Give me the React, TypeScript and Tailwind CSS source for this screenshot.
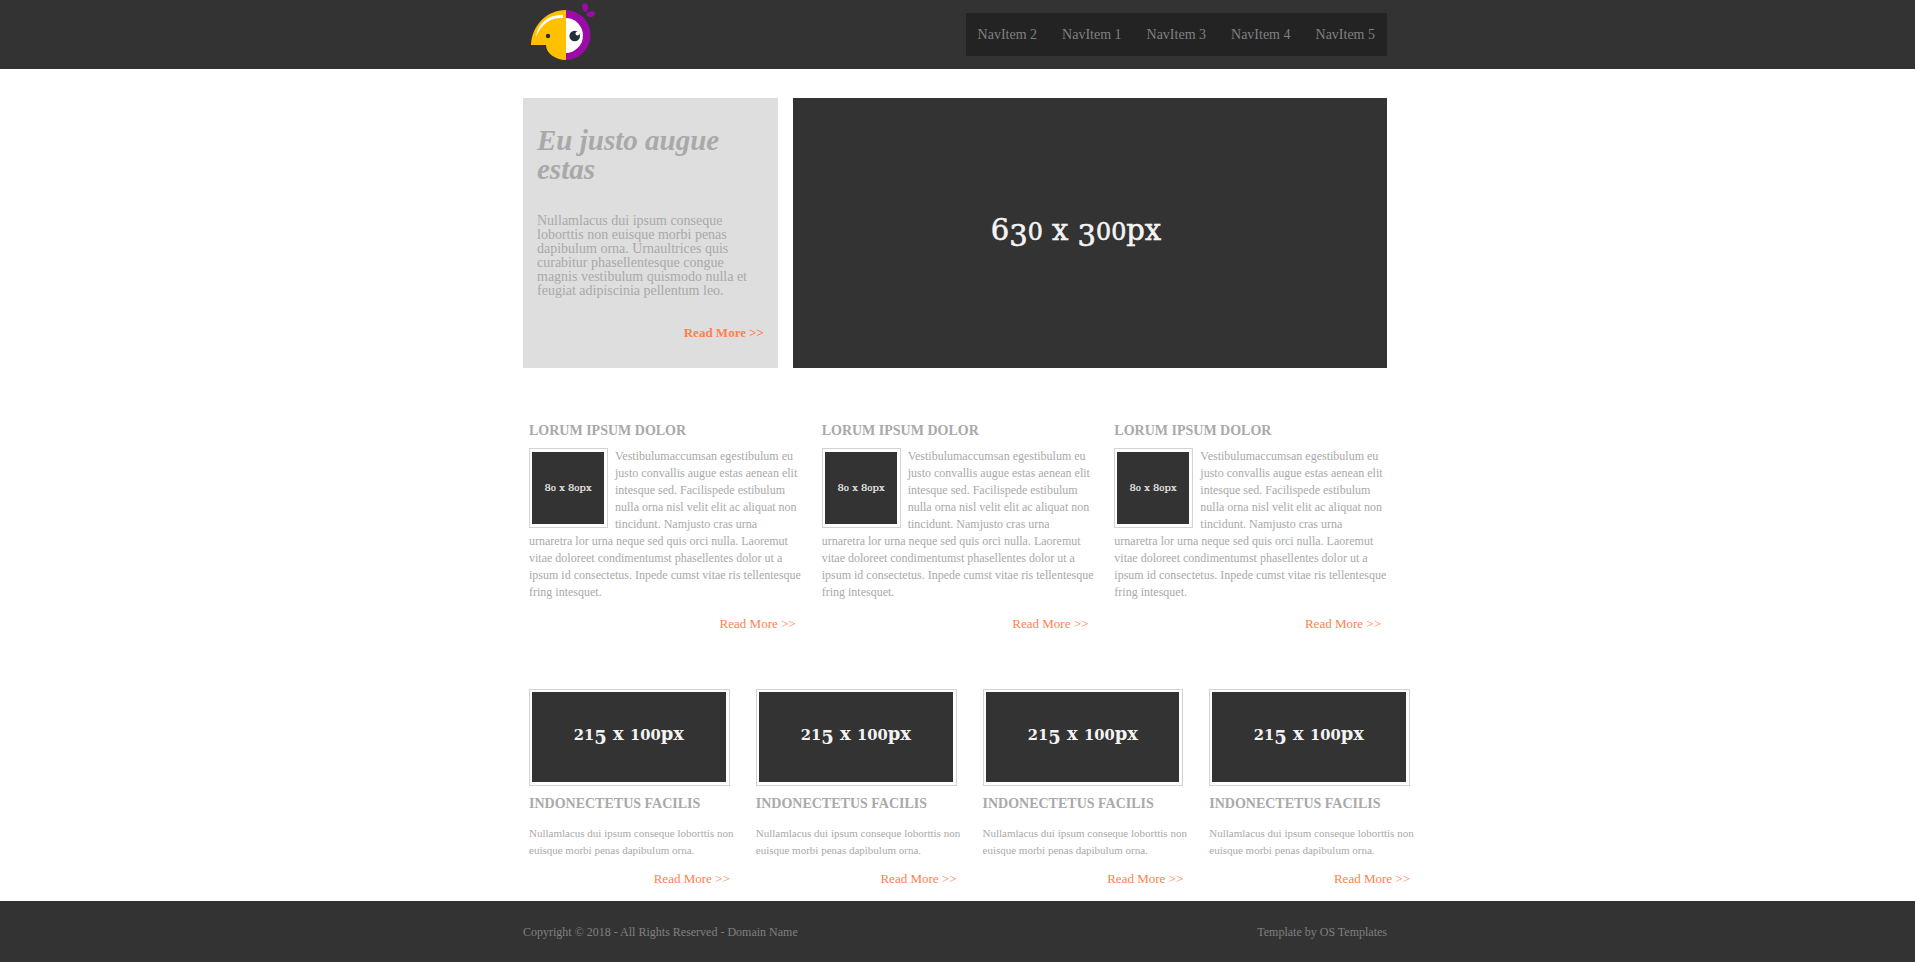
type Run = { t: string; size: number; dy: number };

const navItems = ["NavItem 2", "NavItem 1", "NavItem 3", "NavItem 4", "NavItem 5"];

// Old-style numerals: 0, 1 and 2 sit at x-height, 3 and 5 drop below the baseline.
function runs(text: string, size: number): Run[] {
  return (text.match(/[012]+|[35]+|[^01235]+/g) ?? []).map((t) => {
    if (/^[012]/.test(t)) return { t, size: size * 0.82, dy: 0 };
    if (/^[35]/.test(t)) return { t, size, dy: size * 0.2 };
    return { t, size, dy: 0 };
  });
}

type PlaceholderProps = {
  text: string;
  width: number;
  height: number;
  size: number;
  x: number;
  y: number;
  bold?: boolean;
};

function Placeholder({ text, width, height, size, x, y, bold }: PlaceholderProps) {
  let prev = 0;
  return (
    <svg viewBox={`0 0 ${width} ${height}`} className="block w-full bg-[#333]" role="img" aria-label={text}>
      <text
        x={x}
        y={y}
        textAnchor="middle"
        fill="#f4f4f4"
        stroke="#f4f4f4"
        strokeWidth={bold ? 0 : size * 0.02}
        fontSize={size}
        fontWeight={bold ? 700 : 400}
        className="font-['DejaVu_Serif',serif]"
      >
        {runs(text, size).map((g, i) => {
          const dy = g.dy - prev;
          prev = g.dy;
          return (
            <tspan key={i} fontSize={g.size} dy={dy}>
              {g.t}
            </tspan>
          );
        })}
      </text>
    </svg>
  );
}

function Logo() {
  return (
    <svg viewBox="0 0 100 69" className="block h-[69px] w-[100px]" role="img" aria-label="Logo">
      <path d="M50.500 10A25 25 0 0 1 50.500 60Z" fill="#9c0ba8" />
      <path d="M50.500 18A17.500 17.500 0 0 1 50.500 53Z" fill="#fff" />
      <path d="M51 10V60C40 60 31 53 31 45H16C17 25 32 10 51 10Z" fill="#ffc000" />
      <path d="M21 37C23 23 34 14 48 15V18C36 17 26 24 21 37Z" fill="#fff" />
      <circle cx="33" cy="36" r="2.200" fill="#22303c" />
      <circle cx="59.700" cy="36" r="5.300" fill="#22303c" />
      <circle cx="62.500" cy="33.500" r="2" fill="#fff" />
      <path d="M69.500 3.200C73.500 3 74 7.500 71.800 12H70C66.500 9.500 66 4 69.500 3.200Z" fill="#9c0ba8" />
      <path d="M71 14.500C73.500 10.500 79.500 10.500 80 13.500C79.500 18 73 18 71 14.500Z" fill="#9c0ba8" />
    </svg>
  );
}

function ReadMore({ bold }: { bold?: boolean }) {
  return (
    <p className="text-right text-[13px] leading-[17px]">
      <a href="#" className={bold ? "font-bold text-[#ff7f50]" : "text-[#ff7f50]"}>
        Read More &gt;&gt;
      </a>
    </p>
  );
}

export default function App() {
  return (
    <div className="flex min-h-screen flex-col bg-white font-['Liberation_Serif',serif] text-[#a9a9a9]">
      <header className="bg-[#333] pr-[5px]">
        <div className="mx-auto flex max-w-[864px] items-center justify-between">
          <a href="#" className="-ml-2">
            <Logo />
          </a>
          <nav className="bg-[#232323]">
            <ul className="flex gap-px">
              {navItems.map((item) => (
                <li key={item}>
                  <a href="#" className="block px-3 text-[14px] leading-[43px] text-[#808080]">
                    {item}
                  </a>
                </li>
              ))}
            </ul>
          </nav>
        </div>
      </header>

      <main className="grow pr-[5px]">
        <div className="mx-auto max-w-[864px]">
          <section className="mt-[29px] flex gap-[15px]">
            <div className="w-[255px] shrink-0 bg-[#dedede] px-[14px] pt-7">
              <h1 className="text-[29px] font-bold italic leading-[29px]">Eu justo augue estas</h1>
              <p className="mt-[30px] text-[14px] leading-[14px]">
                Nullamlacus dui ipsum conseque loborttis non euisque morbi penas dapibulum orna. Urnaultrices quis curabitur
                phasellentesque congue magnis vestibulum quismodo nulla et feugiat adipiscinia pellentum leo.
              </p>
              <div className="mt-[26px]">
                <ReadMore bold />
              </div>
            </div>
            <div className="grow">
              <Placeholder text="630 x 300px" width={594} height={270} size={29} x={283} y={142} />
            </div>
          </section>

          <section className="mt-[54px] grid grid-cols-3 gap-[26px] px-1.5">
            {[0, 1, 2].map((i) => (
              <article key={i}>
                <h2 className="text-[14px] font-bold leading-[17px]">LORUM IPSUM DOLOR</h2>
                <div className="float-left mr-[7px] mt-[9px] w-[79px] border border-[#d3d3d3] py-[3px] pl-[2px] pr-[3px]">
                  <Placeholder text="80 x 80px" width={72} height={72} size={10} x={36} y={39} />
                </div>
                <p className="-mr-1.5 mt-[9px] text-[12px] leading-[17px]">
                  Vestibulumaccumsan egestibulum eu justo convallis augue estas aenean elit intesque sed. Facilispede estibulum
                  nulla orna nisl velit elit ac aliquat non tincidunt. Namjusto cras urna urnaretra lor urna neque sed quis orci
                  nulla. Laoremut vitae doloreet condimentumst phasellentes dolor ut a ipsum id consectetus. Inpede cumst vitae
                  ris tellentesque fring intesquet.
                </p>
                <div className="mt-[14px]">
                  <ReadMore />
                </div>
              </article>
            ))}
          </section>

          <section className="-mr-[23px] ml-1.5 mt-[57px] grid grid-cols-4 gap-[26px]">
            {[0, 1, 2, 3].map((i) => (
              <article key={i}>
                <div className="border border-[#d3d3d3] pb-[3px] pl-[2px] pr-[3px] pt-[2px]">
                  <Placeholder text="215 x 100px" width={194} height={90} size={18} x={97} y={48} bold />
                </div>
                <h2 className="mt-[9px] text-[14px] font-bold leading-[17px]">INDONECTETUS FACILIS</h2>
                <p className="-mr-1.5 mt-[13px] text-[11px] leading-[17px]">
                  Nullamlacus dui ipsum conseque loborttis non euisque morbi penas dapibulum orna.
                </p>
                <div className="mt-[11px]">
                  <ReadMore />
                </div>
              </article>
            ))}
          </section>
        </div>
      </main>

      <footer className="mt-3 bg-[#333] pr-[5px] text-[12px] leading-[17px] text-[#808080]">
        <div className="mx-auto flex max-w-[864px] justify-between pb-[21px] pt-[23px]">
          <p>Copyright © 2018 - All Rights Reserved - Domain Name</p>
          <p>
            Template by <a href="#">OS Templates</a>
          </p>
        </div>
      </footer>
    </div>
  );
}
